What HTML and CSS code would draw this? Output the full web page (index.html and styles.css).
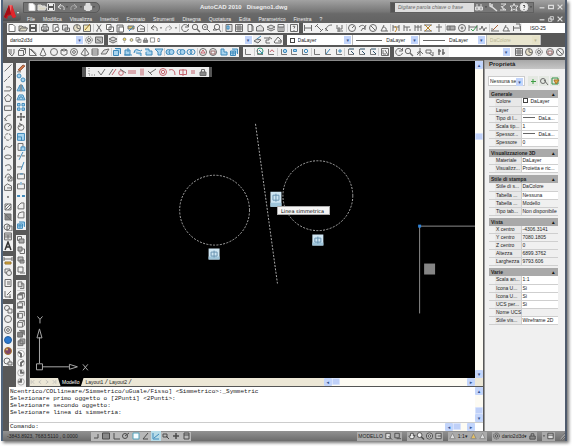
FILE: index.html
```html
<!DOCTYPE html>
<html lang="it">
<head>
<meta charset="utf-8">
<title>AutoCAD 2010 - Disegno1.dwg</title>
<link rel="stylesheet" href="styles.css">
</head>
<body>
<div class="window">
  <header class="header">
    <button class="app-button" aria-label="Menu applicazione">
      <svg viewBox="0 0 16 17" class="app-logo"><path d="M1 14 6 2h3l4 12-3 1-2-3-3 1-1 3z" fill="#c8171e"/><path d="M6 2h3l-1 9z" fill="#f0686a"/><path d="M1 14l5-12 2 9-4 1-1 3z" fill="#a30d14"/><path d="M9 2l4 12-3 1-2-4z" fill="#e0262c"/><path d="M14 9h2l-1 2z" fill="#fff"/></svg>
    </button>
    <div class="title-row">
      <div class="quick" data-icons="new open save undo v redo v print v"></div>
      <h1 class="title"><span>AutoCAD 2010</span><span>Disegno1.dwg</span></h1>
      <div class="search">
        <span class="search-grip"></span>
        <input class="search-input" aria-label="Cerca" placeholder="Digitare parola chiave o frase">
        <div class="search-tools" data-icons="binoc v key satellite star question v"></div>
      </div>
      <div class="win-buttons" data-icons="min max close"></div>
    </div>
    <div class="menu-row">
      <nav class="menu">
        <a href="#">File</a><a href="#">Modifica</a><a href="#">Visualizza</a><a href="#">Inserisci</a><a href="#">Formato</a><a href="#">Strumenti</a><a href="#">Disegna</a><a href="#">Quotatura</a><a href="#">Edita</a><a href="#">Parametrico</a><a href="#">Finestra</a><a href="#">?</a>
      </nav>
      <div class="win-buttons" data-icons="min restore close"></div>
    </div>
  </header>

  <div class="toolbars">
    <div class="bar-row">
      <div class="bar bar-standard" data-icons="new open save | print preview publish globe markup | cut copy paste brush block | undo v redo v | orbit zoom zoomwin zoomprev | props grid tool sheet layers calc | help"></div>
      <div class="bar bar-dims">
        <div class="icons" data-icons="dim aligned arc ordinate | radius jog diameter angle | quick base cont xbreak center | toler target inspect wave | edit angle update"></div>
        <label class="combo combo-plain"><select aria-label="Stile di quota"><option>ISO-25</option></select></label>
      </div>
    </div>
    <div class="bar-row bar-row-layers">
      <div class="bar bar-space">
        <label class="combo"><select aria-label="Area di lavoro"><option>dario2d3d</option></select></label>
        <div class="icons" data-icons="gear panel"></div>
      </div>
      <div class="bar bar-layers">
        <div class="icons" data-icons="layers"></div>
        <label class="combo"><span class="pre" data-icons="bulb sun copy lock square"></span><select aria-label="Layer"><option>0</option></select></label>
        <div class="icons" data-icons="layerset layerprev layerst"></div>
      </div>
      <div class="bar bar-props">
        <label class="combo"><span class="swatch"></span><select aria-label="Colore"><option>DaLayer</option></select></label>
        <label class="combo"><span class="rule rule-long"></span><select aria-label="Tipo di linea"><option>DaLayer</option></select></label>
        <label class="combo"><span class="rule"></span><select aria-label="Spessore di linea"><option>DaLayer</option></select></label>
        <label class="combo combo-off"><select aria-label="Stile di stampa" disabled><option>DaColore</option></select></label>
      </div>
    </div>
    <div class="bar-row">
      <div class="bar bar-solids" data-icons="polysolid box wedge cone sphere cylinder torus pyramid helix plane | bextrude bpush bsweep brev bloft | bunion bsub bint | orbit3 globe3 bslice bbox"></div>
      <div class="bar bar-ucs" data-icons="ucs | ucsworld ucsprev | ucsface ucsobj ucsview | ucs ucsz ucs3 | ucsx ucsx ucsx | ucsapply"></div>
      <div class="bar bar-view">
        <div class="icons" data-icons="orbit zoom walk fly steps"></div>
        <label class="combo"><select aria-label="Vista"><option></option></select></label>
        <div class="icons" data-icons="grid globe gear globe3 diameter"></div>
      </div>
    </div>
  </div>

  <main class="workspace">
    <div class="desk">
      <div class="drawing-row">
        <div class="tool-col">
          <div class="tools tools-draw" data-icons="line xline pline polygon rect arc radius cloud spline ellipse earc insert block point hatch gradient region table textA"></div>
          <div class="tools tools-dist" data-icons="distance area list locate"></div>
          <div class="tools tools-render" data-icons="hide sphere torus bluesphere colorsphere render"></div>
        </div>
        <div class="tool-col">
          <div class="tools tools-modify" data-icons="erase bcopy mirror offset array move rotate scale stretch trim extend break1 break2 join chamfer fillet bbox"></div>
          <div class="tools tools-order" data-icons="front back above below"></div>
          <div class="tools tools-views" data-icons="views | top bottom left box front3 bgrid | iso1 iso2 iso3 iso4"></div>
        </div>
        <div class="drawing">
          <section class="canvas" aria-label="Area di disegno">
            <svg class="plot" viewBox="29 61 446 316" preserveAspectRatio="xMinYMin meet">
              <g fill="none" stroke="#a8a8a8" stroke-width="1" stroke-dasharray="2 1.4">
                <circle cx="214" cy="210.500" r="35"/>
                <circle cx="317.500" cy="196" r="35"/>
                <path d="M255 124 277 284"/>
              </g>
              <g>
                <path d="M270 192h11v15h-11zM208 249h11v11h-11zM312 235h11v11h-11z" fill="#cfe6f3"/>
                <path d="M270 203h11v4h-11zM208 257h11v3h-11zM312 243h11v3h-11z" fill="#9fc5da"/>
                <path d="M272.500 195.500h6v5h-6zM275.500 194v8M210.500 252.500h6v4h-6zM213.500 251v7M314.500 238.500h6v4h-6zM317.500 237v7" fill="none" stroke="#6a95b2"/>
              </g>
              <path d="M475 226.500H419.500V314" fill="none" stroke="#8c8c8c"/>
              <path d="M418 225h3v3h-3z" fill="#2f83d8"/>
              <path d="M424 264h11v11h-11z" fill="#858585"/>
              <g fill="none" stroke="#a8a8a8">
                <path d="M35.500 364.500h6v6h-6zM38.500 364v-26M36 338.500h5l-2.500-9zM42 367.500h26M68.500 365v5l8-2.500z"/>
                <path d="M36.500 317l2.500 3 2.500-3M39 320v4M82 365l5 6M87 365l-5 6"/>
              </g>
            </svg>
            <div class="float-bar" data-icons="dots coincident rparallel rtangent rhoriz rvert perp rconcentric rarc rsymm requal lock"></div>
            <div class="tooltip" role="tooltip">Linea simmetrica</div>
          </section>
          <div class="vscroll"><button class="sb up" aria-label="Su"></button><span class="track track-a"></span><span class="thumb"></span><span class="track track-b"></span><button class="sb down" aria-label="Giù"></button></div>
          <div class="tabs">
            <span class="tab-nav" data-icons="tfirst tprev tnext tlast"></span>
            <button class="tab tab-on">Modello</button><button class="tab">Layout1</button><i class="slash">/</i><button class="tab">Layout2</button><i class="slash">/</i>
            <div class="hscroll"><button class="sb prev" aria-label="Sinistra"></button><span class="thumb"></span><span class="track"></span><button class="sb next" aria-label="Destra"></button></div>
          </div>
          <div class="corner"></div>
        </div>
      </div>
      <section class="command" aria-label="Riga di comando">
        <div class="history">
          <pre class="log">Ncentrico/COLlineare/Simmetrico/uGuale/Fisso] &lt;Simmetrico&gt;:_Symmetric
Selezionare primo oggetto o [2Punti] &lt;2Punti&gt;:
Selezionare secondo oggetto:
Selezionare linea di simmetria:</pre>
          <div class="vscroll"><button class="sb up" aria-label="Su"></button><span class="track track-a"></span><span class="thumb"></span><button class="sb down" aria-label="Giù"></button></div>
        </div>
        <div class="prompt">
          <label for="cmd">Comando:</label><input id="cmd">
          <div class="hscroll"><button class="sb prev" aria-label="Sinistra"></button><span class="thumb"></span><span class="track"></span><button class="sb next" aria-label="Destra"></button></div>
        </div>
      </section>
    </div>

    <aside class="palette">
      <h2 class="palette-title">Proprietà</h2>
      <div class="palette-head">
        <label class="combo"><select aria-label="Selezione"><option>Nessuna sele</option></select></label>
        <div class="palette-tools" data-icons="plus pick filter"></div>
      </div>
      <div class="groups">
        <section class="group"><h3>Generale</h3><table>
          <tr><th>Colore</th><td><span class="swatch"></span>DaLayer</td></tr>
          <tr><th>Layer</th><td>0</td></tr>
          <tr><th>Tipo di l...</th><td><span class="rule"></span>DaLa...</td></tr>
          <tr><th>Scala tip...</th><td>1</td></tr>
          <tr><th>Spessor...</th><td><span class="rule"></span>DaLa...</td></tr>
          <tr><th>Spessore</th><td>0</td></tr></table></section>
        <section class="group"><h3>Visualizzazione 3D</h3><table>
          <tr><th>Materiale</th><td>DaLayer</td></tr>
          <tr><th>Visualizz...</th><td>Proietta e ric...</td></tr></table></section>
        <section class="group"><h3>Stile di stampa</h3><table>
          <tr><th>Stile di s...</th><td class="fixed">DaColore</td></tr>
          <tr><th>Tabella ...</th><td>Nessuna</td></tr>
          <tr><th>Tabella ...</th><td class="fixed">Modello</td></tr>
          <tr><th>Tipo tab...</th><td class="fixed">Non disponibile</td></tr></table></section>
        <section class="group"><h3>Vista</h3><table>
          <tr><th>X centro</th><td class="fixed">-4306.3141</td></tr>
          <tr><th>Y centro</th><td class="fixed">7080.1805</td></tr>
          <tr><th>Z centro</th><td class="fixed">0</td></tr>
          <tr><th>Altezza</th><td class="fixed">6899.3762</td></tr>
          <tr><th>Larghezza</th><td class="fixed">9793.606</td></tr></table></section>
        <section class="group"><h3>Varie</h3><table>
          <tr><th>Scala an...</th><td>1:1</td></tr>
          <tr><th>Icona U...</th><td>Sì</td></tr>
          <tr><th>Icona U...</th><td>Sì</td></tr>
          <tr><th>UCS per...</th><td>Sì</td></tr>
          <tr><th>Nome UCS</th><td class="fixed"></td></tr>
          <tr><th>Stile vis...</th><td>Wireframe 2D</td></tr></table></section>
      </div>
    </aside>
  </main>

  <footer class="status">
    <span class="coords">-3843.8923, 7683.5110 , 0.0000</span>
    <div class="status-set status-toggles" data-icons="snap sgrid ortho polar osnap otrack ducs dyn cross qp"></div>
    <span class="fill"></span>
    <div class="status-set"><button class="status-text">MODELLO</button><span class="inline-icons" data-icons="layout below"></span></div>
    <div class="status-set" data-icons="pan zoom wheel motion"></div>
    <div class="status-set"><span class="inline-icons" data-icons="person"></span><button class="status-text">1:1▾</button><span class="inline-icons" data-icons="goldperson person"></span></div>
    <div class="status-set"><span class="inline-icons" data-icons="gear"></span><button class="status-text">dario2d3d▾</button><span class="inline-icons" data-icons="lock"></span></div>
    <div class="status-set" data-icons="v windowed"></div>
    <span class="grip"></span>
  </footer>
</div>
<script src="icons.js"></script>
</body>
</html>
```
FILE: styles.css
```css
* { box-sizing: border-box; }
body {
  margin: 0;
  height: 100vh;
  padding: 0 5px 5px 1px;
  background: #fff;
  font: 5px/8px "Liberation Sans", sans-serif;
  color: #222;
}
button, input, select { font: inherit; color: inherit; margin: 0; padding: 0; border: 0; background: none; }
a { color: inherit; text-decoration: none; }
h1, h2, h3, pre { margin: 0; font: inherit; }
svg { display: block; }

.window {
  display: flex;
  flex-direction: column;
  height: 100%;
  background: #585858;
  border-left: 2px solid #50647c;
  border-right: 2px solid #4e5a6c;
  box-shadow: 2px 2px 3px #777;
}

/* Icon buttons */
.ic { display: block; flex: 0 1 10px; width: 10px; min-width: 0; height: 10px; min-height: 0; }
.ic svg { width: 10px; height: 100%; fill: none; stroke: #6c6c6c; stroke-width: 1; }
.ic-v { flex-basis: 4px; width: 4px; }
.ic-v svg { width: 4px; }
.sep { flex: none; width: 1px; height: 8px; background: #ccc; }

/* Title and menu */
.header {
  display: grid;
  grid-template-columns: 18px 1fr;
  grid-template-rows: 14px 9px;
  background: linear-gradient(#a2a2a2, #777 50%, #696969 60%, #626262);
}
.app-button { grid-row: 1 / 3; margin: 2px 0; background: linear-gradient(#999, #4e4e4e); border-radius: 0 3px 3px 0; }
.app-logo { width: 16px; height: 17px; }
.title-row { display: flex; align-items: center; justify-content: space-between; }
.quick {
  display: flex;
  align-items: center;
  justify-content: space-between;
  width: 77px;
  height: 11px;
  padding: 0 3px;
  margin-left: 2px;
  background: #747474;
  border: 1px solid #5a5a5a;
  border-radius: 0 5px 5px 0;
}
.header .ic svg { stroke: #ddd; }
.title { display: flex; gap: 5px; margin-left: 100px; font-size: 6px; font-weight: bold; color: #eee; }
.search { display: flex; align-items: center; height: 11px; margin-left: auto; background: #777; border: 1px solid #606060; }
.search-grip { width: 4px; height: 9px; background: #555; }
.search-input { width: 79px; height: 9px; padding: 0 3px; background: #dedede; font-style: italic; }
.search-input::placeholder { color: #666; opacity: 1; }
.search-tools { display: flex; align-items: center; width: 59px; justify-content: space-between; }
.win-buttons { display: flex; margin: 0 1px 0 4px; width: 26px; justify-content: space-between; }
.win-buttons .ic { flex-basis: 8px; width: 8px; }
.win-buttons .ic svg { width: 8px; }
.menu-row { display: flex; justify-content: space-between; align-items: center; }
.menu { display: flex; gap: 8px; padding-left: 6px; color: #eee; }

/* Toolbars */
.toolbars { display: flex; flex-direction: column; gap: 2px; padding: 0 0 3px 4px; }
.bar-row { display: flex; gap: 4px; }
.bar-row-layers { padding-right: 24px; }
.bar, .icons { display: flex; align-items: center; justify-content: space-between; min-width: 0; }
.bar { height: 10px; background: #f1f1f1; }
.icons { flex: 1; }
.bar-standard { flex: 292; }
.bar-dims { flex: 262; }
.bar-dims .combo { width: 43px; }
.bar-space { flex: 97; }
.bar-space .combo { width: 77px; }
.bar-layers { flex: 174; }
.bar-layers .icons { flex: none; }
.bar-layers .combo { flex: 1; }
.bar-props { flex: 254; }
.bar-props .combo { flex: 70; border-right: 1px solid #bbb; }
.bar-props .combo-off { flex: 54; }
.bar-solids { flex: 232; }
.bar-ucs { flex: 147; }
.bar-view { flex: 171; }
.bar-view .combo { width: 62px; margin: 0 3px; }

.combo { position: relative; display: flex; align-items: center; min-width: 0; height: 10px; padding: 0 8px 0 3px; background: #fff; }
.combo select { appearance: none; flex: 1; width: 100%; min-width: 0; height: 8px; opacity: 1; text-overflow: ellipsis; overflow: hidden; }
.combo::after, .sb { color: #31538f; background: #c3d5fb; font: bold 5px/8px "DejaVu Sans", sans-serif; text-align: center; }
.combo::after { content: "▾"; position: absolute; right: 1px; top: 1px; width: 7px; height: 8px; }
.combo-plain { padding-left: 8px; }
.combo-plain::after { display: none; }
.combo-off { background: #e9e6cf; color: #bbb796; }
.combo-off::after { background: #e6e2c8; color: #bbb796; }
.pre { display: flex; flex: none; margin-right: 1px; }
.pre .ic { flex-basis: 7px; width: 7px; }
.pre .ic svg { width: 7px; }
.swatch { display: inline-block; flex: none; width: 5px; height: 5px; margin-right: 3px; border: 1px solid #444; background: #fff; }
.rule { display: inline-block; flex: none; width: 12px; height: 1px; margin-right: 4px; background: #666; vertical-align: 2px; }
.bar-props .rule { width: 22px; }
.bar-props .rule-long { width: 26px; }

/* Workspace */
.workspace { display: flex; flex: 1; min-height: 0; }
.desk { display: flex; flex-direction: column; flex: 1; min-width: 0; }
.drawing-row { display: flex; flex: 1; min-height: 0; }
.tool-col { display: flex; flex-direction: column; gap: 5px; width: 10px; margin: 3px 3px 0 0; }
.tools { display: flex; flex-direction: column; justify-content: space-between; align-items: center; min-height: 0; background: #f1f1f1; }
.tools .sep { width: 8px; height: 1px; }
.tools-draw { flex: 187; }
.tools-dist { flex: 42; }
.tools-render { flex: 62; margin-bottom: 21px; }
.tools-modify { flex: 167; }
.tools-order { flex: 40; }
.tools-views { flex: 107; }
.drawing { display: grid; grid-template-columns: 1fr 8px; grid-template-rows: 1fr 8px; flex: 1; min-width: 0; border: 1px solid #8a8a8a; border-right: 0; border-bottom: 1px solid #555; }
.canvas { position: relative; min-height: 0; background: #000; overflow: hidden; }
.plot { width: 100%; height: 100%; }
.float-bar {
  position: absolute;
  left: 52px;
  top: 6px;
  display: flex;
  justify-content: space-between;
  width: 130px;
  height: 10px;
  padding: 0 1px;
  background: #eee;
  border: solid #555;
  border-width: 0 3px 0 4px;
}
.tooltip { position: absolute; left: 247px; top: 145px; width: 53px; height: 9px; padding-left: 3px; background: #f4f4f4; border: 1px solid #aaa; font: 5px/8px "DejaVu Sans", sans-serif; color: #000; white-space: nowrap; }

.vscroll, .hscroll { display: flex; background: #fdfbf3; }
.vscroll { flex-direction: column; width: 8px; }
.sb { flex: none; width: 8px; height: 8px; border-radius: 1px; }
.up::before { content: "▴"; }
.down::before { content: "▾"; }
.prev::before { content: "◂"; }
.next::before { content: "▸"; }
.thumb { flex: none; width: 8px; height: 7px; background: #bfd0f8; border: 1px solid #d8e3fc; border-radius: 1px; }
.track { flex: 1; }
.drawing .track-a { flex: 64; }
.drawing .track-b { flex: 230; }

.tabs { display: flex; align-items: center; min-width: 0; height: 8px; background: #ece7d6; }
.tab-nav { display: flex; justify-content: space-between; width: 27px; margin-right: 1px; }
.tab-nav .ic { flex-basis: 6px; height: 8px; }
.tab-nav .ic svg { width: 6px; stroke: #aaa; }
.tab { height: 8px; padding: 0 1px; }
.tab-on { padding: 0 4px; margin-right: 1px; background: #000; color: #fff; clip-path: polygon(0 0, 100% 0, 90% 100%, 10% 100%); }
.slash { margin: 0 1px; font-size: 7px; }
.tabs .hscroll { width: 34%; margin-left: auto; }
.corner { background: #ece7d6; }

/* Command line */
.command { display: flex; flex-direction: column; margin-left: 6px; background: #fff; }
.history { display: flex; justify-content: space-between; height: 36px; border-bottom: 1px solid #ccc; }
.log { padding: 1px; font: 6px/7px "Liberation Mono", monospace; overflow: hidden; }
.prompt { display: flex; align-items: center; height: 8px; font: 6px/8px "Liberation Mono", monospace; padding-left: 1px; }
.prompt input { flex: 1; min-width: 0; height: 8px; }
.prompt .hscroll { width: 30px; margin-right: 8px; }

/* Properties palette */
.palette { display: flex; flex-direction: column; width: 81px; margin-left: 1px; background: #f0f0f0; border-left: 1px solid #999; overflow: hidden; }
.palette-title { height: 9px; padding-left: 4px; font: bold 6px/9px "Liberation Sans", sans-serif; background: linear-gradient(#a8a8a8, #c6c6c6); }
.palette-head { display: flex; align-items: center; justify-content: space-between; padding: 7px 5px 4px 3px; }
.palette-head .combo { width: 37px; padding-left: 1px; border: 1px solid #ccc; }
.palette-head select { text-overflow: clip; }
.palette-tools { display: flex; gap: 1px; }
.palette-tools .ic { background: #e4e8e2; }
.groups { display: flex; flex-direction: column; gap: 2px; margin: 0 7px 0 4px; }
.group h3 { display: flex; justify-content: space-between; height: 8px; padding: 0 3px 0 2px; font-weight: bold; background: #a9a9a9; white-space: nowrap; }
.group h3::after { content: "▴"; color: #111; }
.group table { width: 100%; table-layout: fixed; border-collapse: collapse; }
.group tr { height: 8px; }
.group th, .group td { height: 8px; padding: 0 0 0 1px; line-height: 7px; font-weight: normal; text-align: left; white-space: nowrap; border-bottom: 1px solid #cfcfcf; }
.group th { width: 32px; padding-left: 7px; background: linear-gradient(90deg, #f0f0f0 6px, #e8e8e8 6px); border-right: 1px solid #cfcfcf; }
.group td { background: #fff; }
.group td.fixed { background: #f0f0f0; }

/* Status bar */
.status { display: flex; align-items: center; gap: 5px; height: 10px; background: linear-gradient(#929292, #6c6c6c); }
.coords { width: 83px; padding-left: 4px; white-space: nowrap; }
.status-set { display: flex; align-items: center; height: 9px; background: #aaa; }
.status-toggles { background: #b8b8b8; }
.inline-icons { display: flex; }
.status .ic svg { stroke: #4c4c4c; }
.status-toggles ~ .status-set .ic { flex-basis: 9px; width: 9px; }
.status-toggles ~ .status-set .ic svg { width: 9px; }
.status-toggles ~ .status-set .ic-v { flex-basis: 4px; width: 4px; }
.status-toggles ~ .status-set .ic-v svg { width: 4px; }
.status-text { height: 9px; padding: 0 1px; }
.fill { flex: 1; }
.grip { width: 5px; height: 7px; background: repeating-linear-gradient(135deg, #999 0 1px, #666 1px 2px); clip-path: polygon(100% 0, 100% 100%, 0 100%); }
```
FILE: icons.js
```js
// Glyphs on a 10x10 grid; the default stroke comes from the stylesheet.
const B = 'stroke="#3f8abb"', BF = 'fill="#a9d4ee" stroke="#3f8abb"', R = 'stroke="#c4656e"';
const p = (d, a = '') => `<path d="${d}" ${a}/>`;
const c = (x, y, r, a = '') => `<circle cx="${x}" cy="${y}" r="${r}" ${a}/>`;
const axes = p('M2.500 2v5.500H8', 'stroke="#777"');
const G = {
  new: p('M2 1.500h4l2 2v5H2z', 'fill="#fff"'), open: p('M1 8V3h3l1 1h3v1M1 8l2-3h6.500L8 8z', 'fill="#d8d4c0"'),
  save: p('M1.500 1.500h7v7h-7z', 'fill="#555"') + p('M3 2h4v2H3zM3 6h4v2H3z', 'fill="#eee" stroke="none"'),
  print: p('M1.500 4h7v3.500h-7zM3 4V1.500h4V4M3 6h4v2.500H3z', 'fill="#ddd"'),
  preview: p('M2 1.500h5v7H2z') + c(6, 6, 2, 'fill="#fff"'), publish: p('M1.500 2h5v5h-5zM4 5h4.500v3.500H4z', 'fill="#ddd"'),
  globe: c(5, 5, 3.5, 'fill="#e6dfc8"') + p('M5 2v3l3 1'), markup: p('M1.500 2h7v6.500h-7z', 'fill="#f2e7b4"') + p('M3 7l5-6', 'stroke="#98701e"'),
  cut: p('M3 1.500l4 6M7 1.500l-4 6M2 8h2M6 8h2'), copy: p('M1.500 1.500h4.500v5H1.500zM4 4h4.500v4.500H4z', 'fill="#fff"'),
  paste: p('M2 2h6v7H2z', 'fill="#ddd"') + p('M4 4h4.500v5H4z', 'fill="#fff"'),
  brush: p('M2 3h6v3H2z', 'fill="#d8c069"') + p('M3 8l5-5', B), block: p('M1.500 8.500V4l3-2 4 2v4.500zM4 6h5'),
  undo: p('M8 8c1-5-3-5-6-3M2 5l3-3M2 5l3 2'), redo: p('M2 8c-1-5 3-5 6-3M8 5l-3-3M8 5l-3 2', 'stroke="#aaa"'),
  v: p('M2 4h6L5 7z', 'fill="#333" stroke="none"'),
  orbit: p('M8 3a3.500 3.500 0 1 0 .5 3M8.500 1v3H5'), zoom: c(4, 4, 2.7, 'fill="#eee"') + p('M6 6l3 3', 'stroke-width="1.500"'),
  zoomwin: c(4, 4, 2.7) + p('M6 6l3 3M3 4h2.500'), zoomprev: c(5, 4, 2.7) + p('M7 6l2 3M1 7h4M1 7l2-2'),
  props: p('M2 1.500h6v7H2z', 'fill="#ddd"') + p('M3 3h2v3H3z', BF), grid: p('M1.500 1.500h7v7h-7zM1.500 4h7M1.500 6h7M4 2v6M6 2v6'),
  tool: p('M3 1.500h4v7H3zM6 2l2 1v5'), sheet: p('M1.500 4l4-2 3 3v3h-7z', 'fill="#ddd"'),
  layers: p('M1 4l4-2 4 2-4 2zM1 6l4 2 4-2', 'fill="#ddd"'), calc: p('M2 1.500h6v7H2zM2 4h6M4 4v4M6 4v4'),
  help: p('M1.500 1.500h7v7h-7z') + p('M4 4q0-1 1-1 2 0 0 2.500M5 7v1'),
  dim: p('M1.500 2v6M8.500 2v6M2 5h6'), aligned: p('M2 2l6 6M1 4l3-3M6 9l3-3'), arc: p('M2 8c0-4 2-6 6-6M1 5l3 3'),
  ordinate: p('M2 2v4h5V2M4 4v5M2 8h6'), radius: c(5, 5, 3.5) + p('M5 5l2-2'), jog: p('M1 4c3-3 7-2 6 3M3 8l2-3 1 1 2-4'),
  diameter: c(5, 5, 3.5) + p('M3 3l4 4'), angle: p('M2 8l3-6M2 8h7M4 4q4 0 3 4'),
  quick: p('M2 2v6M8 2v6M2 4h6') + p('M4 3l2 3-2 3', 'stroke="#c38a2b"'), base: p('M2 2v6M5 4v4M8 6v2M2 4h6'),
  cont: p('M2 2v6M5 2v6M8 2v6M2 4h6'), xbreak: p('M1 2h8M1 8h8') + p('M2 2l6 6M8 2L2 8', 'stroke="#b7862f"'), center: p('M5 1v8M2 4h6'),
  toler: p('M1 3h8v4H1zM4 3v4', 'fill="#aaa"'), target: c(5, 5, 3.5) + c(5, 5, 1), inspect: p('M1 2v6M9 2v6M1 4h8') + p('M3 6l2 2 4-5', 'stroke="#3f9d54"'),
  wave: p('M1 6h2l1-3 2 5 1-3h2'), edit: p('M1 8h8M2 8V5') + p('M3 7l5-5', 'stroke="#a76038"'), update: p('M1.500 3v5M8.500 3v5M2 5h6M4 1h4v3'),
  gear: c(5, 5, 3.3, 'stroke-dasharray="1.500 .8"') + c(5, 5, 1.5), panel: p('M1.500 2h7v6h-7z', 'fill="#bbb"') + p('M3 4l4 3'),
  bulb: c(5, 4, 2, 'fill="#f4dc5c"') + p('M4 8h2'), sun: c(5, 5, 2, 'fill="#f6eaa2"'), lock: p('M2 5h6v3.500H2z', 'fill="#888"') + p('M3.500 5V2.500h3V5'),
  square: p('M2 2h6v6H2z', 'fill="#fff"'), layerset: p('M1 6l3-2 4 1-3 3z', 'fill="#ddd"') + p('M4 4l4-3', B), layerprev: p('M1 3h5v2H3v3h4M6 2l3 2'),
  layerst: p('M1 7l4-5 3 3v3H2zM5 6h4'),
  polysolid: p('M2 2v4l3 3 2-3V2M4 2v5'), box: p('M1.500 3.500h5v5h-5zM1.500 3.500l2-2h5v5l-2 2M6.500 3.500l2-2'), wedge: p('M1.500 1.500v7h7zM3 2l5.500 5'),
  cone: p('M5 1L2 8q3 2 6 0z'), sphere: c(5, 5, 3.5, 'fill="#eee"'), cylinder: p('M2 3v4q3 3 6 0V3q-3-2-6 0q3 2 6 0'),
  torus: c(5, 5, 3.5) + c(5, 5, 1.4), pyramid: p('M5 1L1 7l4 2 4-2zM5 1v8'), helix: p('M2 2h6M2 4h6M2 6h6M2 8h6M2 2v6M8 2v6'), plane: p('M1 7l3-4 5-1-3 5z', 'fill="#ddd"'),
  bextrude: p('M1.500 3.500h5v5h-5zM3 1.500h5.500V7', BF), bpush: p('M2 3h5v5H2z', BF) + p('M5 1v4M1 8h8', B), bsweep: p('M1 6q1-5 4-3t4 0M3 6h5v3', BF), brev: p('M2 2h4v2h3v4H3V5', BF), bloft: p('M1 2h8L7 5v3H4V5z', BF),
  bunion: c(3.5, 5, 2.5, BF) + c(6.5, 5, 2.5, BF), bsub: c(3.5, 5, 2.5, B) + c(6.5, 5, 2.5, BF), bint: c(3.5, 5, 2.5, B) + c(6.5, 5, 2.5, B),
  orbit3: c(5, 5, 3.5) + p('M5 3l2 3H3z', R), globe3: c(5, 5, 3.5) + p('M3 4h4v3H3z', 'stroke="#966"'), bslice: p('M2 2v6h6V5H5V2z', BF), bbox: p('M1.500 4h5v4.500h-5zM3 2h5.500v5M4 4v4M2 6h5', BF),
  ucs: axes, ucsworld: c(5, 4, 3, 'stroke="#3f9d7d"') + axes + p('M4 3l4 4', B), ucsprev: axes + p('M4 5q2-4 4 0', R), ucsface: axes + c(6, 4, 1.7, BF), ucsobj: axes + p('M4.500 2.500h3v2h-3z', BF), ucsview: axes + c(6, 4, 1.7, B),
  ucsz: axes + p('M3 7l4-5', B), ucs3: axes + p('M4 4h4M6 2v4', B), ucsx: axes + p('M3 2h5M5 4l3 3', 'stroke="#2c506a"'), ucsapply: p('M1.500 1.500h7v7h-7z') + p('M3 3v4h3M5 3l3 5'),
  walk: p('M5 1v8M2 6l3-2 3 3M2 8l3-3'), fly: p('M1 3h5v3H1zM4 6l4 3M8 5v4'), steps: p('M3 2v6M7 2v6M2 4h3M6 6h3', 'stroke-width="1.500"'),
  line: p('M1.500 8.500l7-7'), xline: p('M1 9l8-8M3 7l1-1', 'stroke-dasharray="4 1"'), pline: p('M1 8h6q3-3 0-4H3'), polygon: p('M5 1.500l3.500 3-1.500 4H3l-1.500-4z'), rect: p('M1.500 3h7v4.500h-7z'),
  cloud: c(5, 5, 3.3, 'stroke-dasharray="3 1"'), spline: p('M1 8c2-9 5 2 8-5'), ellipse: '<ellipse cx="5" cy="5" rx="3.500" ry="2"/>', earc: p('M2 4q5-3 6 1T4 8'),
  insert: p('M2 6q2-6 5-3t-2 6M5 5h4v4H5z'), point: p('M4.500 4.500h1v1h-1z'), hatch: p('M2 2h6v6H2zM2 5l3-3M2 8l6-6M5 8l3-3'), gradient: p('M2 2h6v6H2z', 'fill="#888"') + p('M1 1l8 8'),
  region: c(4, 5, 3) + p('M4 4h5v5H4z'), table: p('M1.500 2h7v7h-7zM2 4h6M2 6h6M5 4v4', 'fill="#ddd"'), textA: p('M2 9l3-8 3 8M3 6h4', 'stroke="#333" stroke-width="1.500"'),
  distance: p('M1 3h8M1 1v4M9 1v4') + p('M2 6h6v2H2z', 'fill="#e2b33a" stroke="#987430"'), area: p('M2 2h5v4H2z') + c(6, 6, 2.5, 'fill="#eee"'), list: p('M2 1.500h6v7H2zM4 4h3M4 6h3'), locate: p('M2 2v6h6M4 6l4-4M7 5v4'),
  hide: c(4, 4, 2.5) + p('M5 5h4v4H5z', 'fill="#eee"'), bluesphere: c(5, 5, 3.5, 'fill="#2b78cf" stroke="#245f9e"'), colorsphere: c(5, 5, 3.5, 'fill="#7e4668" stroke="#a9782d"') + c(4, 3.5, 1, 'fill="#ebc450" stroke="none"'), render: c(4, 5, 3) + p('M5 6h4v3H5z', 'fill="#ddd"'),
  erase: p('M2 7l5-5 2 1-5 5z', 'fill="#d67a4a" stroke="#8f553a"') + p('M1 9h4'), bcopy: c(3, 3, 2, BF) + c(7, 7, 2, BF), mirror: p('M4 2v6H1zM6 2v6h3z', BF) + p('M5 1v8'), offset: p('M1 8l2-5h4l2 5zM3 7l1-2h2l1 2', BF),
  array: p('M1.500 1.500h2.500v2.500H1.500zM6 1.500h2.500v2.500H6zM1.500 6h2.500v2.500H1.500zM6 6h2.500v2.500H6z', BF), move: p('M5 1v8M1 5h8M4 2h2M4 8h2M2 4v2M8 4v2', 'stroke="#444"'), rotate: c(5, 5.5, 3) + p('M3 1l3 2-3 2'), scale: p('M1.500 1.500h7v7h-7zM1.500 5h4v4', BF),
  stretch: p('M2 1.500h5v7H2z') + p('M5 5h4v4H5z', BF), trim: p('M1 5h3M6 5h3') + p('M7 1L3 9', B), extend: p('M1 6h5') + p('M8 1L5 9', B), break1: p('M1.500 3h7v5h-7z') + p('M4 3h3', B), break2: p('M1.500 3h2.500M6 3h2.500v5h-7V3') + p('M5 1v3', B),
  join: p('M1 5h3M6 5h3', 'stroke="#3f8abb" stroke-width="2"'), chamfer: p('M2 8V5l3-3h3v6z'), fillet: p('M2 8V6q0-4 4-4h2v6z'),
  front: p('M1.500 1.500h4v4h-4z') + p('M3 4h5v4H3z', 'fill="#aaa"'), back: p('M4 4h4.500v4.500H4z') + p('M2 2h4v4H2z', 'fill="#aaa"'), above: p('M2 2h5v4H2zM4 5h4v3H4z', 'fill="#bbb"'), below: p('M2 2h5v5H2zM4 8h5'),
  views: p('M2 2h4v5H2zM5 4h3v5H4', 'fill="#ddd"'), top: p('M1.500 4h5v4.500h-5zM1.500 4l2-2h5v4.500l-2 2') + p('M2 4l2-2h4L6 4z', 'fill="#777"'), bottom: p('M1.500 3h5v4h-5zM3 1.500h5.500V6') + p('M1 8h6', 'stroke-width="2"'), left: p('M1.500 3.500h5v5h-5zM3 1.500h5.500v5') + p('M2 3v5', 'stroke-width="2"'),
  front3: p('M3 1.500h5.500v5M1.500 3.500h5v5h-5z', 'fill="#888"'), bgrid: p('M2 3h5v5H2zM4 1h5v5H4z', 'fill="#aaa"'),
  iso1: c(5, 5, 3.5, 'fill="#fff" stroke="#aaa"') + p('M2 3l3 2v4', 'stroke-width="2"'), iso2: c(5, 5, 3.5, 'fill="#fff" stroke="#aaa"') + p('M8 3L5 5v4', 'stroke-width="2"'), iso3: c(5, 5, 3.5, 'stroke="#aaa"') + p('M5 2v3h3', 'stroke-width="2"'), iso4: c(5, 5, 3.5, 'stroke="#aaa"') + p('M5 2v3H2', 'stroke-width="2"'),
  dots: p('M2 1v7M2 8h7', 'stroke-dasharray="1 1.500"'), coincident: p('M1 4l3 4 4-6'), rparallel: p('M2 8l4-6') + p('M5 8l4-6', R), rtangent: c(4, 6, 2.3, R) + p('M3 2l6 4'), rhoriz: p('M1 4h8M1 6h8', R), rvert: p('M4 1.500v7M6 1.500v7', R),
  perp: p('M1 4l4 4M3 6l6-4'), rconcentric: c(5, 5, 3.5, R) + c(5, 5, 1.7, R), rarc: p('M1 3q6-2 6 5', R), rsymm: p('M1.500 3h7v4.500h-7zM5 2v7', R), requal: p('M3 4h4M3 6h4', R),
  tfirst: p('M7 2L4 5l3 3M2 2v6'), tprev: p('M7 2L3 5l4 3'), tnext: p('M3 2l4 3-4 3'), tlast: p('M3 2l3 3-3 3M8 2v6'),
  min: p('M2 6h6', 'stroke-width="1.500"'), max: p('M2 3h6v4H2z', 'stroke-width="1.500"'), restore: p('M4 2h4v4H4zM2 4h4v4H2z'), close: p('M2 2l6 6M8 2L2 8', 'stroke-width="1.500"'),
  binoc: p('M1.500 5h3v3h-3zM5.500 5h3v3h-3zM3 2v3M7 2v3M4 5h2', 'fill="#aaa"'), key: p('M2 1v3l2 1 5 4M4 2v3', 'stroke-width="1.500"'), satellite: p('M3 2h5L4 5l4 3H2M3 4l3 4'), star: p('M5 1.500l1 2.500h3L7 6l1 3-3-2-3 2 1-3-2-2h3z'), question: c(5, 5, 4, 'fill="#eee"') + p('M4 4q1-2 2 0l-1 2M5 7v1', 'stroke="#555"'),
  plus: p('M5 3v5M3 5.500h5', 'stroke="#3c9d42"'), pick: c(4, 5, 2.5) + p('M5 4l4 5'), filter: p('M2 2h6v6H2z', 'stroke="#399248"') + p('M4 4h5L6 8z', 'fill="#e5b445" stroke="#a66f28"'),
  snap: p('M3 7h4V3'), sgrid: p('M1.500 2h7v6h-7z', 'fill="#888"'), ortho: p('M3 2v6h6'), polar: c(4, 5, 2.5) + p('M4 5l4-3'), osnap: p('M2 2h6v6H2z', 'fill="#f5fcff" stroke="#55a4bd"'), otrack: p('M2 8l5-6M2 8h5'), ducs: p('M0 0h10v10H0z', 'fill="#b8dce8" stroke="none"') + p('M2 2v6h6M3 7l5-4', B),
  dyn: p('M2 3h4v3H2zM5 5l3 3'), cross: p('M5 2v6M2 5h6', 'stroke-width="1.500"'), qp: p('M3 2h5v6H3zM3 4h5'), layout: p('M2 2h5v6H2zM5 5l4 4', 'fill="#ddd"'),
  pan: p('M2 5l2 3h3l2-4-2 1V2H4v3z', 'fill="#eee"'), wheel: c(5, 5, 3.5, 'fill="#ccc"') + c(5, 5, 1.5), motion: p('M2 2h6v6H2zM4 5h4', 'fill="#ccc"'),
  person: p('M5 2L2 8h6z', 'fill="#ddd" stroke="#888"'), goldperson: p('M5 2L2 8h6z', 'fill="#e3bf63" stroke="#888"'), windowed: p('M2 2h6v6H2zM2 4h6', 'fill="#ddd"')
};

document.querySelectorAll('[data-icons]').forEach(host => {
  host.innerHTML = host.dataset.icons.split(' ').map(n => {
    if (n === '|') return '<span class="sep"></span>';
    const tag = host.classList.contains('pre') ? 'span' : 'button';
    return `<${tag} class="ic ic-${n}" aria-label="${n}"><svg viewBox="0 0 10 10">${G[n]}</svg></${tag}>`;
  }).join('');
});
```
